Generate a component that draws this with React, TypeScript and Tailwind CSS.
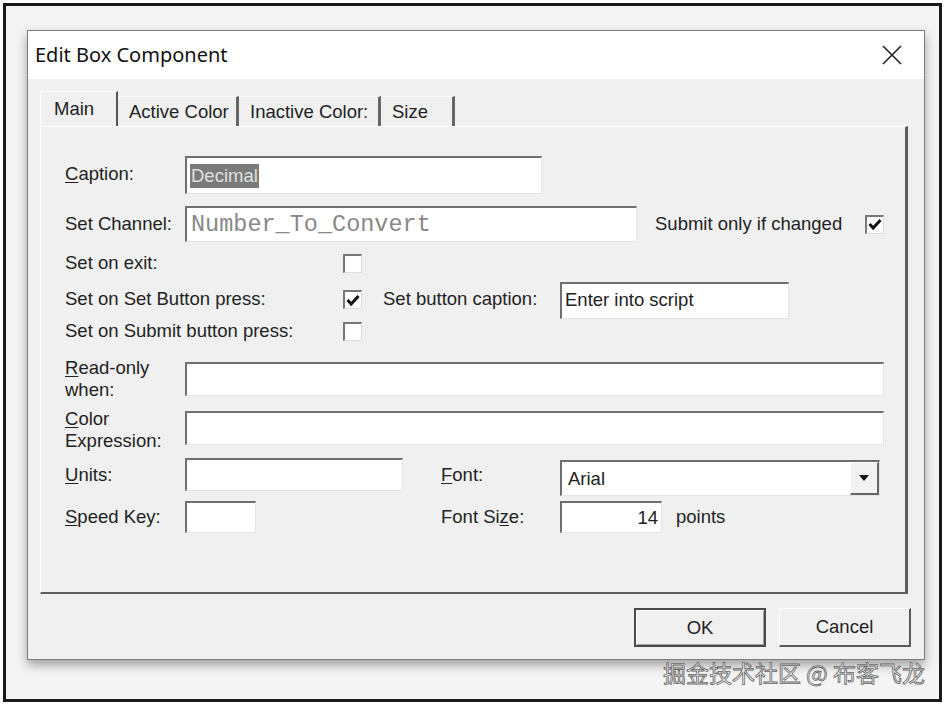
import type { ReactNode } from "react";

const labelFont = "font-['Liberation_Sans',Arial,sans-serif] text-[18.5px] text-[#222]";

function Field(props: { w: string; h: string; children?: ReactNode; className?: string }) {
    return (
        <div
            className={`${props.w} ${props.h} flex items-center bg-white border-t-2 border-l-2 border-t-[#6f6f6f] border-l-[#6f6f6f] border-r border-b border-r-[#e4e4e4] border-b-[#e4e4e4] pl-[3px] ${props.className ?? ""}`}
        >
            {props.children}
        </div>
    );
}

function Check(props: { checked?: boolean; className?: string }) {
    return (
        <div className={`w-[19px] h-[19px] flex items-center justify-center bg-white border-t-2 border-l-2 border-t-[#777] border-l-[#777] border-r border-b border-r-[#ddd] border-b-[#ddd] ${props.className ?? ""}`}>
            {props.checked && (
                <svg width="14" height="13" viewBox="0 0 14 13">
                    <path d="M1.5 6 L5.2 10 L12.5 2" fill="none" stroke="#111" strokeWidth="3" />
                </svg>
            )}
        </div>
    );
}

function Tab(props: { label: string; active?: boolean; w: string }) {
    return props.active ? (
        <div className={`${props.w} h-[35px] flex items-center pl-[13px] border-t border-l border-white border-r-2 border-r-[#555] bg-[#f0f0f0]`}>
            <span>{props.label}</span>
        </div>
    ) : (
        <div className={`${props.w} h-[30px] flex items-center pl-[11px] border-r-[3px] border-r-[#666] border-t border-t-[#fafafa]`}>
            <span>{props.label}</span>
        </div>
    );
}

export default function App() {
    return (
        <div className="w-[945px] h-[705px] bg-white pt-[3px] pl-[3px]">
            <div className="relative w-[939px] h-[699px] border-[3px] border-[#1a1a1a] bg-[#f4f4f4] pl-[21px] pt-[24px]">
                {/* Dialog window */}
                <div className="w-[898px] h-[630px] flex flex-col border border-[#7c7c7c] shadow-[0_5px_10px_rgba(0,0,0,0.35)]">
                    {/* Title bar */}
                    <div className="h-[48px] flex items-center justify-between bg-white pl-[7px] pr-[22px]">
                        <span className="font-['Noto_Sans',sans-serif] text-[20px] text-[#111]">Edit Box Component</span>
                        <svg width="20" height="20" viewBox="0 0 20 20">
                            <path d="M1 1 L19 19 M19 1 L1 19" stroke="#222" strokeWidth="1.6" />
                        </svg>
                    </div>

                    {/* Body */}
                    <div className={`flex-1 bg-[#f0f0f0] pl-[12px] pt-[12px] ${labelFont}`}>
                        {/* Tabs */}
                        <div className="flex items-end h-[35px]">
                            <Tab label="Main" active w="w-[78px]" />
                            <Tab label="Active Color" w="w-[121px]" />
                            <Tab label="Inactive Color:" w="w-[142px]" />
                            <Tab label="Size" w="w-[74px]" />
                        </div>

                        {/* Panel */}
                        <div className="w-[868px] h-[468px] border-t border-l border-white border-r-[3px] border-b-2 border-r-[#5e5e5e] border-b-[#5e5e5e] pl-[24px] pt-[29px] flex flex-col">
                            <div className="flex items-center h-[38px]">
                                <span className="w-[120px] -mt-[3px]"><u className="underline-offset-2">C</u>aption:</span>
                                <Field w="w-[357px]" h="h-[38px]">
                                    <span className="bg-[#7a7a7a] text-[#e0e0e0] px-[1px] leading-[24px]">Decimal</span>
                                </Field>
                            </div>

                            <div className="flex items-center h-[36px] mt-[12px]">
                                <span className="w-[120px]">Set Channel:</span>
                                <Field w="w-[452px]" h="h-[36px]">
                                    <span className="font-['Liberation_Mono','Courier_New',monospace] text-[23.5px] text-[#888] pl-[1px]">Number_To_Convert</span>
                                </Field>
                                <span className="ml-[18px] w-[210px]">Submit only if changed</span>
                                <Check checked />
                            </div>

                            <div className="flex items-center h-[22px] mt-[10px]">
                                <span className="w-[278px]">Set on exit:</span>
                                <Check />
                            </div>

                            <div className="flex items-center h-[37px] mt-[8px]">
                                <span className="w-[278px] -mt-[3px]">Set on Set Button press:</span>
                                <Check checked className="-mt-[2px]" />
                                <span className="ml-[21px] w-[177px] -mt-[3px]">Set button caption:</span>
                                <Field w="w-[229px]" h="h-[37px]">
                                    <span className="-mt-[3px]">Enter into script</span>
                                </Field>
                            </div>

                            <div className="flex items-center h-[22px] mt-[1px]">
                                <span className="w-[278px]">Set on Submit button press:</span>
                                <Check />
                            </div>

                            <div className="flex items-center h-[34px] mt-[20px]">
                                <span className="w-[120px] leading-[22px]"><u className="underline-offset-2">R</u>ead-only<br />when:</span>
                                <Field w="w-[699px]" h="h-[34px]" />
                            </div>

                            <div className="flex items-center h-[34px] mt-[15px]">
                                <span className="w-[120px] leading-[22px] mt-[4px]"><u className="underline-offset-2">C</u>olor<br />Expression:</span>
                                <Field w="w-[699px]" h="h-[34px]" />
                            </div>

                            <div className="flex items-center h-[38px] mt-[13px]">
                                <span className="w-[120px] -mt-[4px]"><u className="underline-offset-2">U</u>nits:</span>
                                <Field w="w-[218px]" h="h-[33px]" className="self-start" />
                                <span className="ml-[38px] w-[119px] -mt-[4px]"><u className="underline-offset-2">F</u>ont:</span>
                                <div className="w-[320px] h-[36px] self-end flex bg-white border-t-2 border-l-2 border-t-[#6f6f6f] border-l-[#6f6f6f] border-r border-b border-r-[#e4e4e4] border-b-[#e4e4e4]">
                                    <span className="flex-1 flex items-center pl-[6px]">Arial</span>
                                    <div className="w-[29px] h-full flex items-center justify-center bg-[#f2f2f2] border-t border-l border-white border-r-2 border-b-2 border-r-[#666] border-b-[#666]">
                                        <svg width="12" height="8" viewBox="0 0 12 8">
                                            <path d="M1 1 L11 1 L6 7 Z" fill="#111" />
                                        </svg>
                                    </div>
                                </div>
                            </div>

                            <div className="flex items-center h-[32px] mt-[5px]">
                                <span className="w-[120px]"><u className="underline-offset-2">S</u>peed Key:</span>
                                <Field w="w-[71px]" h="h-[32px]" />
                                <span className="ml-[185px] w-[119px]">Font Si<u className="underline-offset-2">z</u>e:</span>
                                <Field w="w-[102px]" h="h-[32px]" className="justify-end pr-[3px]">
                                    <span>14</span>
                                </Field>
                                <span className="ml-[14px]">points</span>
                            </div>
                        </div>

                        {/* Buttons */}
                        <div className="flex justify-end gap-[13px] pr-[13px] mt-[14px]">
                            <button className="w-[132px] h-[39px] flex items-center justify-center bg-[#f0f0f0] border-2 border-[#4a4a4a] shadow-[inset_1px_1px_0_#fff,inset_-1px_-1px_0_#a0a0a0]">
                                OK
                            </button>
                            <button className="w-[132px] h-[39px] flex items-center justify-center bg-[#f0f0f0] border-t border-l border-white border-r-2 border-b-2 border-r-[#5a5a5a] border-b-[#5a5a5a]">
                                Cancel
                            </button>
                        </div>
                    </div>
                </div>

                {/* Watermark */}
                <span className="absolute right-[14px] bottom-[10px] font-['Noto_Sans_CJK_SC',sans-serif] text-[23px] text-[#f4f4f4] [-webkit-text-stroke:0.8px_#666]">
                    掘金技术社区 @ 布客飞龙
                </span>
            </div>
        </div>
    );
}
